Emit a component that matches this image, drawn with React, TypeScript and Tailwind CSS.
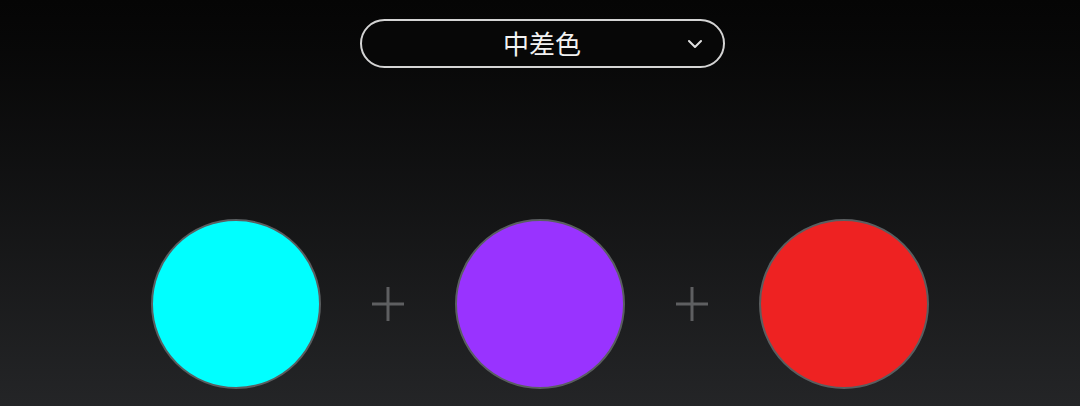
import React from 'react';

const colors = ['bg-[#00ffff]', 'bg-[#9933ff]', 'bg-[#ee2222]'];

const Plus: React.FC = () => (
  <svg width="32" height="34" viewBox="0 0 32 34" className="shrink-0">
    <path d="M16 0v34M0 17h32" stroke="#5e5f61" strokeWidth="3" fill="none" />
  </svg>
);

const App: React.FC = () => {
  return (
    <div
      className="w-[1080px] h-[406px] overflow-hidden bg-gradient-to-b from-[#050505] to-[#242527] flex flex-col items-center"
      style={{ fontFamily: '"Noto Sans CJK SC", "Noto Sans", sans-serif' }}
    >
      {/* Dropdown */}
      <button className="mt-[19px] ml-[4px] w-[365px] h-[49px] rounded-full border-2 border-[#d4d4d4] bg-[#070707] relative flex items-center justify-center">
        <span className="text-[26px] text-[#f2f2f2] leading-none -mt-[2px]">中差色</span>
        <svg
          width="14"
          height="9"
          viewBox="0 0 14 9"
          className="absolute right-[21px] top-1/2 -translate-y-1/2"
        >
          <path d="M1 1.5l6 6 6-6" stroke="#e0e0e0" strokeWidth="2" fill="none" strokeLinecap="round" strokeLinejoin="round" />
        </svg>
      </button>

      {/* Colour circles */}
      <div className="mt-[151px] flex items-center gap-[51px] -ml-[1px]">
        {colors.map((c, i) => (
          <React.Fragment key={c}>
            {i > 0 && <Plus />}
            <div className={`w-[170px] h-[170px] rounded-full border-2 border-[#5a5e60] ${c}`} />
          </React.Fragment>
        ))}
      </div>
    </div>
  );
};

export default App;
